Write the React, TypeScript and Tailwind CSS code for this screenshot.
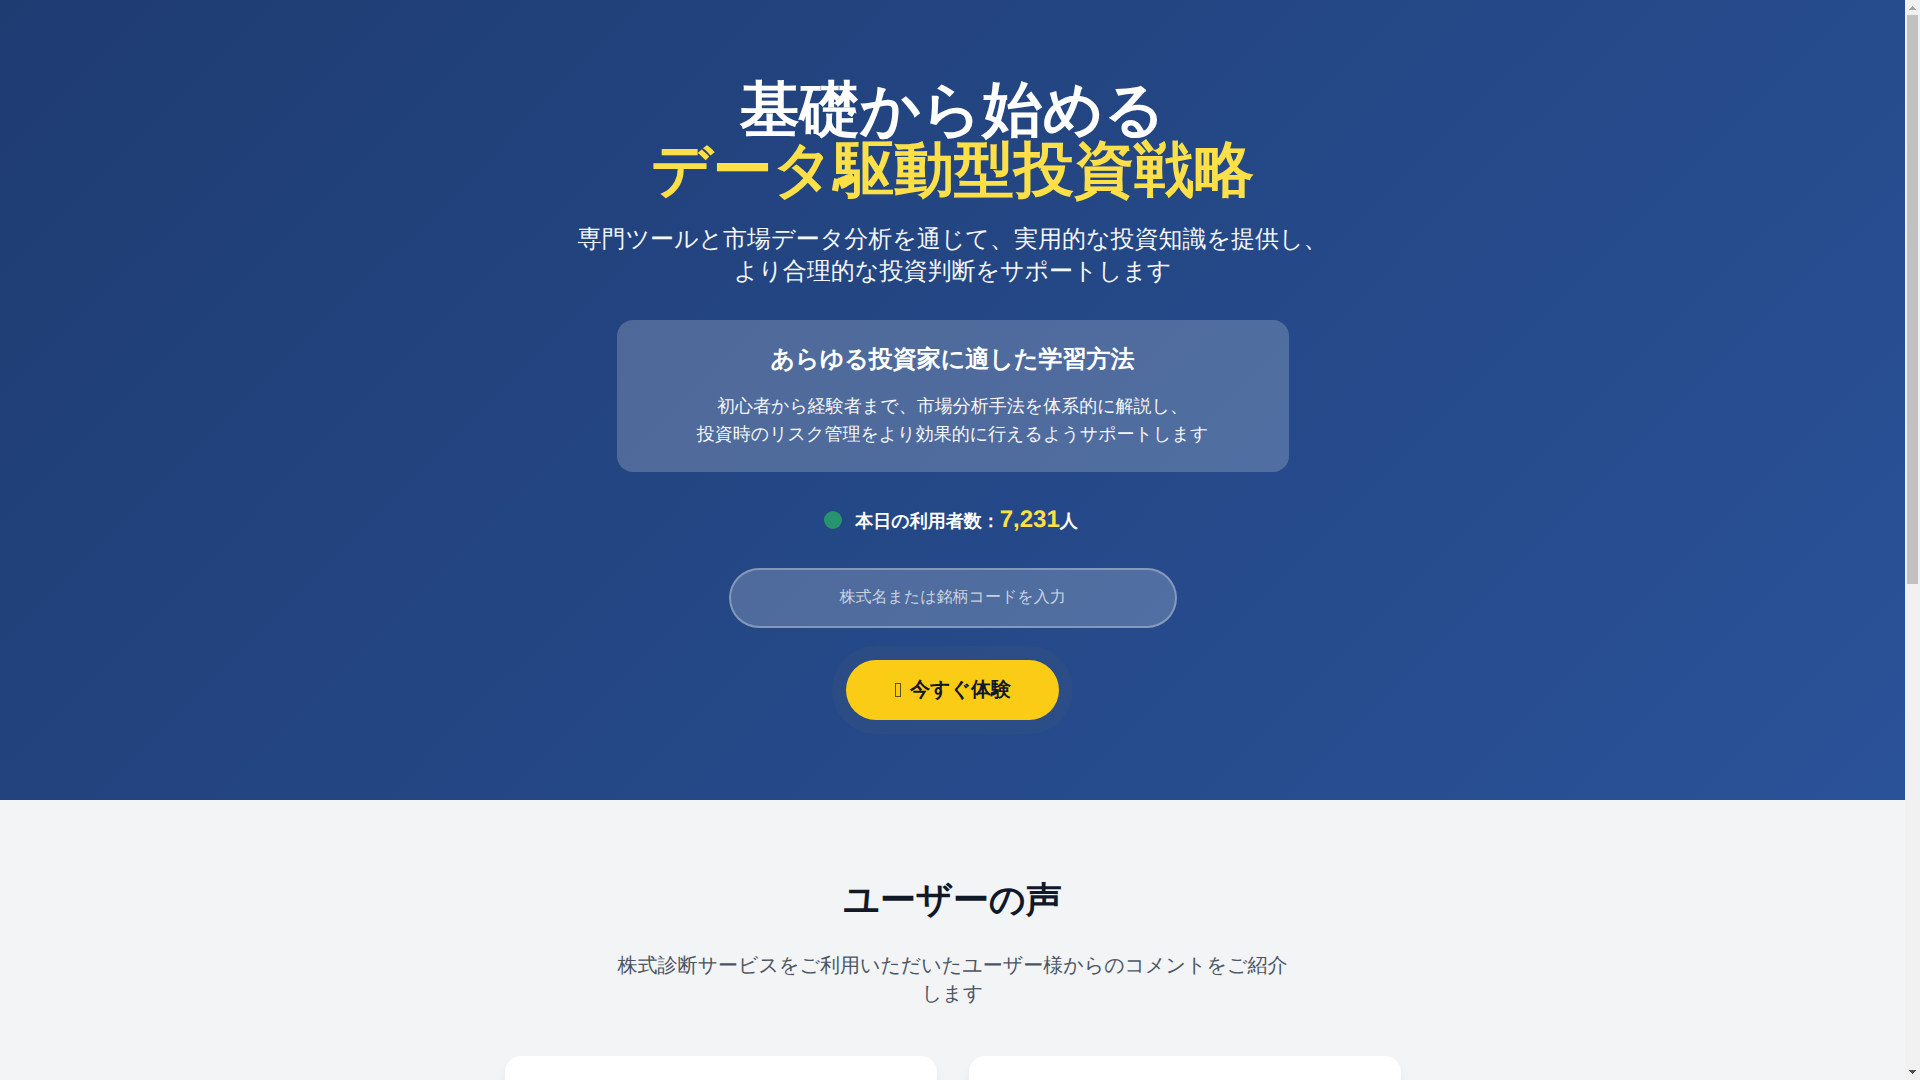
import { useState } from 'react'

const DAILY_USERS = 7231

function Hero() {
  const [stock, setStock] = useState('')

  return (
    <section className="bg-linear-[135deg,#1e3c72_0%,#2a5298_100%] px-4 py-20 text-center text-white">
      <h1 className="mb-6 text-6xl font-bold">
        基礎から始める
        <span className="block text-[#fde047]">データ駆動型投資戦略</span>
      </h1>
      <p className="mb-8 text-2xl opacity-95">
        専門ツールと市場データ分析を通じて、実用的な投資知識を提供し、
        <br />
        より合理的な投資判断をサポートします
      </p>

      <div className="mx-auto mb-8 max-w-2xl rounded-2xl bg-white/20 p-6">
        <h2 className="mb-4 text-2xl font-bold">あらゆる投資家に適した学習方法</h2>
        <p className="text-lg leading-7 opacity-95">
          初心者から経験者まで、市場分析手法を体系的に解説し、
          <br />
          投資時のリスク管理をより効果的に行えるようサポートします
        </p>
      </div>

      <div className="mb-8 flex items-center justify-center gap-4">
        <span className="size-3 rounded-full bg-[#26946e] ring-3 ring-[#26946e]" />
        <p className="text-lg leading-7 font-bold">
          本日の利用者数：
          <span className="text-2xl text-[#fde047]">{DAILY_USERS.toLocaleString('en-US')}</span>人
        </p>
      </div>

      <form className="flex flex-col items-center gap-8" onSubmit={(e) => e.preventDefault()}>
        <input
          type="text"
          aria-label="株式名または銘柄コードを入力"
          placeholder="株式名または銘柄コードを入力"
          value={stock}
          onChange={(e) => setStock(e.target.value)}
          className="w-full max-w-md rounded-full border-2 border-white/30 bg-white/20 px-6 py-4 text-center text-base text-white [text-rendering:inherit] placeholder:text-white/70"
        />
        <button
          type="submit"
          className="flex items-center rounded-full bg-[#facc15] px-12 py-4 text-xl font-bold text-[#111827] shadow-[0_0_0_14px_rgba(250,204,21,0.03)] [text-rendering:inherit]"
        >
          <span className="mr-2 flex w-2 justify-center">
            <span className="h-[14px] w-[6px] border border-[#111827]/70" />
          </span>
          今すぐ体験
        </button>
      </form>
    </section>
  )
}

function Testimonials() {
  return (
    <section className="grow bg-[#f3f4f6] px-4 pt-20 text-center">
      <h2 className="mb-8 text-4xl font-bold text-[#111827]">ユーザーの声</h2>
      <p className="mx-auto mb-12 max-w-2xl text-xl text-[#4b5563]">
        株式診断サービスをご利用いただいたユーザー様からのコメントをご紹介します
      </p>
      <div className="mx-auto grid max-w-4xl grid-cols-2 gap-8">
        <div className="h-60 rounded-2xl bg-white shadow-lg" />
        <div className="h-60 rounded-2xl bg-white shadow-lg" />
      </div>
    </section>
  )
}

function Scrollbar() {
  return (
    <div className="flex w-[15px] shrink-0 flex-col items-center bg-[#f1f1f1]" aria-hidden="true">
      <svg className="h-[15px] w-[15px] shrink-0" viewBox="0 0 15 15" shapeRendering="crispEdges">
        <path d="M7 6h1v1h1v1h1v1h1v1H4V9h1V8h1V7h1z" fill="#a3a3a3" />
      </svg>
      <div className="w-full grow px-[2px]">
        <div className="h-[54.2%] bg-[#c1c1c1]" />
      </div>
      <svg className="h-[15px] w-[15px] shrink-0" viewBox="0 0 15 15" shapeRendering="crispEdges">
        <path d="M4 5h7v1h-1v1H9v1H8v1H7V8H6V7H5V6H4z" fill="#505050" />
      </svg>
    </div>
  )
}

export default function App() {
  return (
    <div
      lang="ja"
      className="flex h-screen overflow-hidden font-['Liberation_Sans',sans-serif] [text-rendering:geometricPrecision]"
    >
      <main className="flex min-w-0 flex-1 flex-col overflow-hidden [&>section]:shrink-0">
        <Hero />
        <Testimonials />
      </main>
      <Scrollbar />
    </div>
  )
}
